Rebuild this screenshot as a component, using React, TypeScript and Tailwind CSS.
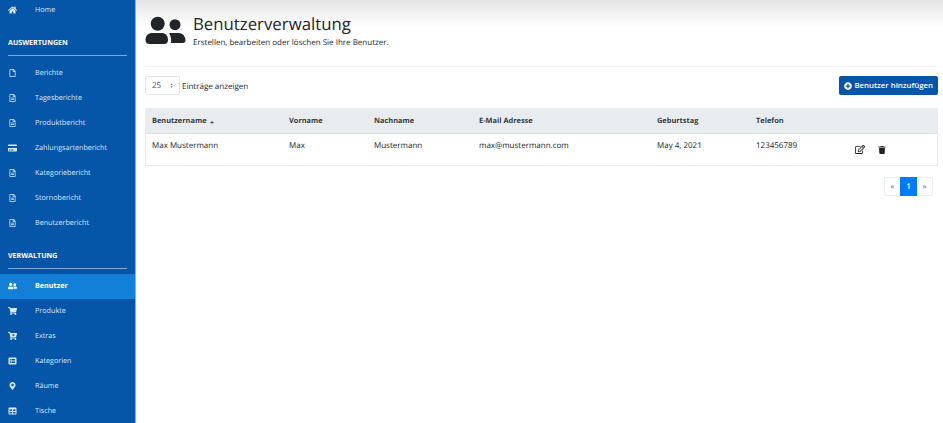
import {
  FaCartPlus,
  FaCreditCard,
  FaRegEdit,
  FaRegFile,
  FaRegFileAlt,
  FaHome,
  FaMapMarkerAlt,
  FaPlusCircle,
  FaShoppingCart,
  FaTable,
  FaTrash,
  FaUserFriends,
  FaCaretUp,
  FaListAlt,
} from "react-icons/fa";
import type { IconType } from "react-icons";

function NavItem({ icon: Icon, label, active }: { icon: IconType; label: string; active?: boolean }) {
  return (
    <div
      className={`flex h-[25px] shrink-0 items-center pl-2 text-[7.2px] ${
        active ? "bg-[#1180d6] font-bold text-white" : "text-[#dbe7f4]"
      }`}
    >
      <span className="-mt-px flex w-[27px] shrink-0">
        <Icon className="h-[8px] w-[9px]" />
      </span>
      {label}
    </div>
  );
}

function SectionHead({ label }: { label: string }) {
  return (
    <div className="mx-2 mb-[5px] shrink-0 border-b border-[#7fa9d8] pb-[6px] text-[7.1px] font-bold leading-[12px] text-white">
      {label}
    </div>
  );
}

const reports: [IconType, string][] = [
  [FaRegFile, "Berichte"],
  [FaRegFileAlt, "Tagesberichte"],
  [FaRegFileAlt, "Produktbericht"],
  [FaCreditCard, "Zahlungsartenbericht"],
  [FaRegFileAlt, "Kategoriebericht"],
  [FaRegFileAlt, "Stornobericht"],
  [FaRegFileAlt, "Benutzerbericht"],
];

const admin: [IconType, string][] = [
  [FaShoppingCart, "Produkte"],
  [FaCartPlus, "Extras"],
  [FaListAlt, "Kategorien"],
  [FaMapMarkerAlt, "Räume"],
  [FaTable, "Tische"],
];

const columns = [
  ["Benutzername", "w-[137px]"],
  ["Vorname", "w-[85px]"],
  ["Nachname", "w-[105px]"],
  ["E-Mail Adresse", "w-[178px]"],
  ["Geburtstag", "w-[99px]"],
  ["Telefon", "w-[89px]"],
];

const cells = ["Max Mustermann", "Max", "Mustermann", "max@mustermann.com", "May 4, 2021", "123456789"];

export default function App() {
  return (
    <div className="flex h-[423px] w-[943px] overflow-hidden bg-white font-['Open_Sans',sans-serif] text-[#212529] [text-rendering:geometricPrecision]">
      <aside className="flex w-[136px] shrink-0 flex-col border-r border-[#7fb2e0] bg-[#0556a9]">
        <div className="mb-[14px] mt-[-2px]">
          <NavItem icon={FaHome} label="Home" />
        </div>
        <SectionHead label="AUSWERTUNGEN" />
        {reports.map(([icon, label]) => (
          <NavItem key={label} icon={icon} label={label} />
        ))}
        <div className="mt-[14px]">
          <SectionHead label="VERWALTUNG" />
        </div>
        <NavItem icon={FaUserFriends} label="Benutzer" active />
        {admin.map(([icon, label]) => (
          <NavItem key={label} icon={icon} label={label} />
        ))}
      </aside>

      <main className="flex min-w-0 flex-1 flex-col">
        <div className="bg-gradient-to-b from-[#e4e4e4] via-white via-40% to-white pl-[9px] pr-[5px] pt-[15px]">
          <div className="flex h-[52px] items-start border-b border-[#eff1f3]">
            <div className="flex w-[48px] shrink-0 items-start">
              <svg viewBox="0 0 42 30" className="h-[30px] w-[42px]" fill="#212529">
                <circle cx="12.700" cy="8.700" r="7" />
                <path d="M.5 25c0-4.500 3-7 7-7h9c4 0 6.500 2.500 6.500 7 0 2.500-1.500 4-4 4H4.500c-2.500 0-4-1.500-4-4z" />
                <circle cx="30" cy="9.700" r="5.500" />
                <path d="M24 18h9.500c4 0 7 3 7 7.500 0 1.500-1 2.500-2.500 2.500H26c.5-3 0-7-2-10z" />
              </svg>
            </div>
            <div>
              <div className="text-[16.8px] leading-[18px]">Benutzerverwaltung</div>
              <div className="mt-[4px] text-[8px] leading-[12px]">
                Erstellen, bearbeiten oder löschen Sie Ihre Benutzer.
              </div>
            </div>
          </div>
        </div>

        <div className="pl-[9px] pr-[5px]">
          <div className="mt-[9px] flex h-[19px] items-center justify-between">
            <div className="flex items-center text-[8px]">
              <div className="mr-[2px] flex h-[19px] w-[35px] items-center justify-between rounded-[2px] border border-[#e1e5ea] px-[6px] text-[#495057]">
                25
                <span className="flex flex-col text-[3px] leading-[3px]">
                  <span>▲</span>
                  <span>▼</span>
                </span>
              </div>
              <span className="pt-[3px]">Einträge anzeigen</span>
            </div>
            <button className="flex h-[19px] items-center gap-[2px] rounded-[2px] bg-[#0556a9] px-[5px] text-[7.8px] font-semibold text-white">
              <FaPlusCircle className="h-[8px] w-[8px]" />
              Benutzer hinzufügen
            </button>
          </div>

          <div className="mt-[13px] border border-[#e9ecef]">
            <div className="flex h-[25px] items-center border-b border-[#dee2e6] bg-[#e9ecef] pl-[6px] pt-[2px] text-[7.4px] font-bold text-[#343a40]">
              {columns.map(([label, width], i) => (
                <div key={label} className={`flex items-center gap-[2px] ${width}`}>
                  {label}
                  {i === 0 && <FaCaretUp className="h-[6px] w-[6px]" />}
                </div>
              ))}
            </div>
            <div className="flex h-[31px] pl-[6px] text-[8px]">
              {cells.map((cell, i) => (
                <div key={cell} className={`pt-[6px] ${columns[i][1]}`}>
                  {cell}
                </div>
              ))}
              <div className="flex items-center gap-[13px] pl-[10px]">
                <FaRegEdit className="h-[9px] w-[10px]" />
                <FaTrash className="h-[8px] w-[8px]" />
              </div>
            </div>
          </div>

          <div className="mr-[5px] mt-[11px] flex justify-end">
            <div className="flex h-[19px] items-center rounded-[2px] border border-[#eceef1] text-[8px] text-[#6c757d]">
              <span className="flex h-full w-[15px] items-center justify-center">«</span>
              <span className="flex h-[19px] w-[17px] items-center justify-center bg-[#007bff] font-semibold text-white">
                1
              </span>
              <span className="flex h-full w-[15px] items-center justify-center">»</span>
            </div>
          </div>
        </div>
      </main>
    </div>
  );
}
